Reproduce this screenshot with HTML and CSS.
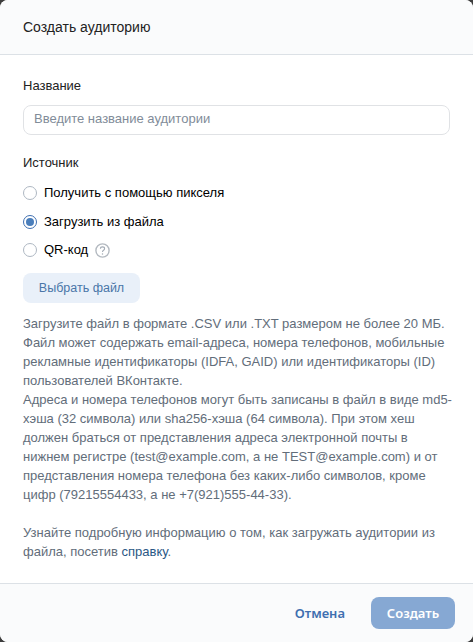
FILE: index.html
```html
<!DOCTYPE html>
<html lang="ru">
<head>
<meta charset="utf-8">
<title>Создать аудиторию</title>
<link rel="stylesheet" href="styles.css">
</head>
<body>
<div class="modal">
  <header class="modal-head">Создать аудиторию</header>
  <main class="modal-body">
    <label class="field-label" for="name">Название</label>
    <input class="text-input" id="name" type="text" placeholder="Введите название аудитории">
    <div class="field-label source-label">Источник</div>
    <div class="radios">
      <div class="radio-row"><span class="radio"></span><span>Получить с помощью пикселя</span></div>
      <div class="radio-row"><span class="radio checked"></span><span>Загрузить из файла</span></div>
      <div class="radio-row"><span class="radio"></span><span>QR-код</span>
        <svg class="help" width="15" height="15" viewBox="0 0 15 15"><circle cx="7.5" cy="7.5" r="6.6" fill="none" stroke="#b4bac1" stroke-width="1.4"/><path d="M5.4 5.8c0-1.2 1-1.9 2.1-1.9s2.1.7 2.1 1.8c0 1.6-2.1 1.6-2.1 3.2" fill="none" stroke="#a3abb5" stroke-width="1.1"/><circle cx="7.5" cy="10.9" r=".75" fill="#a3abb5"/></svg>
      </div>
    </div>
    <button class="file-btn" type="button">Выбрать файл</button>
    <p class="info">Загрузите файл в формате .CSV или .TXT размером не более 20 МБ.<br>Файл может содержать email-адреса, номера телефонов, мобильные<br>рекламные идентификаторы (IDFA, GAID) или идентификаторы (ID)<br>пользователей ВКонтакте.<br>Адреса и номера телефонов могут быть записаны в файл в виде md5-<br>хэша (32 символа) или sha256-хэша (64 символа). При этом хеш<br>должен браться от представления адреса электронной почты в<br>нижнем регистре (test@example.com, а не TEST@example.com) и от<br>представления номера телефона без каких-либо символов, кроме<br>цифр (79215554433, а не +7(921)555-44-33).<br><br>Узнайте подробную информацию о том, как загружать аудитории из<br>файла, посетив <a class="link" href="#">справку</a>.</p>
  </main>
  <footer class="modal-foot">
    <button class="cancel" type="button">Отмена</button>
    <button class="create" type="button">Создать</button>
  </footer>
</div>
</body>
</html>
```

FILE: styles.css
```css
* { box-sizing: border-box; }
html, body { margin: 0; height: 100%; }
body { background: #3d3d3d; font-family: "Liberation Sans", Arial, sans-serif; font-size: 13px; color: #000; }
.modal { width: 473px; height: 642px; background: #fff; border-radius: 8px; display: flex; flex-direction: column; overflow: hidden; }
.modal-head { height: 55px; flex: none; background: #fafbfc; border-bottom: 1px solid #dce1e6; padding: 0 23px; display: flex; align-items: center; font-size: 14px; color: #222; }
.modal-body { flex: 1; padding: 22px 23px 0; }
.field-label { display: block; font-size: 13px; line-height: 18px; color: #222; }
.text-input { display: block; width: 100%; height: 30px; margin-top: 10px; border: 1px solid #e0e2e5; border-radius: 8px; padding: 0 10px 3px; font: 13px "Liberation Sans", Arial, sans-serif; background: #fff; outline: none; }
.text-input::placeholder { color: #818c99; opacity: 1; }
.source-label { margin-top: 19px; }
.radios { margin-top: 12px; display: flex; flex-direction: column; gap: 10.5px; }
.radio-row { display: flex; align-items: center; gap: 7px; height: 18px; line-height: 18px; color: #000; }
.radio { width: 14px; height: 14px; border-radius: 50%; border: 1px solid #aeb7c2; flex: none; background: #fff; }
.radio.checked { border-color: #3f6fb0; position: relative; }
.radio.checked::after { content: ""; position: absolute; left: 2px; top: 2px; width: 8px; height: 8px; border-radius: 50%; background: #4a7ebb; }
.file-btn { display: block; margin-top: 14px; width: 117px; height: 30px; border: 0; border-radius: 8px; background: #e9f0f9; color: #4a76a8; font: 12.5px "Liberation Sans", Arial, sans-serif; }
.info { margin: 11px 0 0; font-size: 13px; line-height: 19px; color: #626d7a; white-space: nowrap; }
.link { color: #2a5885; text-decoration: none; }
.modal-foot { height: 59px; flex: none; background: #fafbfc; border-top: 1px solid #dce1e6; display: flex; align-items: center; justify-content: flex-end; gap: 26px; padding: 0 18px; }
.cancel { border: 0; background: none; padding: 0; color: #3f6fb0; font: 600 13px "Noto Sans", sans-serif; }
.create { width: 84px; height: 32px; border: 0; border-radius: 8px; background: #86a8d3; color: #fff; font: 600 13px "Noto Sans", sans-serif; }
```
